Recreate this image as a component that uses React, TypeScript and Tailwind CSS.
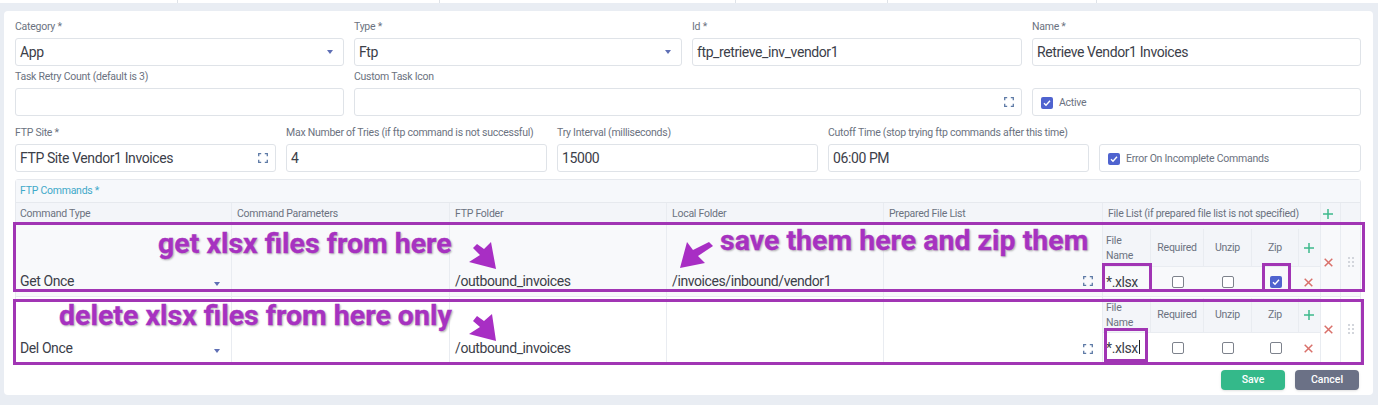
import React from 'react';

const Expand = ({ className = '' }: { className?: string }) => (
  <svg width="10" height="10" viewBox="0 0 10 10" fill="none" stroke="#5d7aa6" strokeWidth="1.3" className={className}>
    <path d="M.7 3.2V.7h2.5M6.8.7h2.5v2.5M9.3 6.8v2.5H6.8M3.2 9.3H.7V6.8" />
  </svg>
);

const Caret = () => <span className="block mr-[3px] w-0 h-0 border-x-[3.5px] border-x-transparent border-t-[4px] border-t-[#5f6fb5]" />;

const Check = ({ checked = false }: { checked?: boolean }) => (
  <span className={`w-[12px] h-[12px] rounded-[2px] flex items-center justify-center shrink-0 ${checked ? 'bg-[#4f63cf]' : 'border border-[#7d828c] bg-white'}`}>
    {checked && (
      <svg width="10" height="10" viewBox="0 0 10 10" fill="none" stroke="#fff" strokeWidth="1.4">
        <path d="M2 5.2l2 2 4-4.4" />
      </svg>
    )}
  </span>
);

const Plus = () => (
  <svg width="10" height="10" viewBox="0 0 10 10" stroke="#3eb98c" strokeWidth="1.5">
    <path d="M5 0v10M0 5h10" />
  </svg>
);

const Cross = () => (
  <svg width="9" height="9" viewBox="0 0 9 9" stroke="#d9706a" strokeWidth="1.5">
    <path d="M.7.7l7.6 7.6M8.3.7L.7 8.3" />
  </svg>
);

const Drag = () => (
  <span className="grid grid-cols-2 gap-x-[2px] gap-y-[2px]">
    {[0, 1, 2, 3, 4, 5].map((i) => (
      <span key={i} className="w-[2px] h-[2px] bg-[#d3d6dc]" />
    ))}
  </span>
);

const small = 'text-[10.5px] tracking-[-0.25px] text-[#6b7280]';
const big = 'text-[14px] tracking-[-0.4px] text-[#3c4049]';

const Field = ({
  label,
  value,
  className = '',
  icon,
}: {
  label: string;
  value?: string;
  className?: string;
  icon?: React.ReactNode;
}) => (
  <div className={className}>
    <div className={`h-[22px] pt-[3px] leading-[16px] whitespace-nowrap ${small}`}>{label}</div>
    <div className={`h-[28px] border border-[#dfe3e8] rounded-[3px] bg-white flex items-center justify-between pl-[4px] pr-[7px] ${big}`}>
      <span>{value}</span>
      {icon}
    </div>
  </div>
);

const CheckField = ({ label, className = '' }: { label: string; className?: string }) => (
  <div className={`${className} flex flex-col justify-end`}>
    <div className={`h-[28px] border border-[#dfe3e8] rounded-[3px] bg-white flex items-center gap-[6px] pl-[8px] pt-[1px] ${small}`}>
      <Check checked />
      {label}
    </div>
  </div>
);

const headers = ['Command Type', 'Command Parameters', 'FTP Folder', 'Local Folder', 'Prepared File List', 'File List (if prepared file list is not specified)'];
const tableCols = 'grid grid-cols-[216px_218px_217px_217px_219px_218px_20px_19px]';
const nestedCols = 'grid grid-cols-[48px_53px_48px_47px_19px]';
const cell = `border-r border-[#e9ecf1] flex items-end pl-[5px] first:pl-[4px] ${big}`;

const Nested = ({ file, zip, headH, pad }: { file: string; zip?: boolean; headH: string; pad: string }) => (
  <div className={`${pad} border-r border-[#e9ecf1]`}>
    <div className={`${nestedCols} ${headH} bg-[#f3f5f9] border-b border-[#e9ecf1] ${small}`}>
      <div className="border-r border-[#e9ecf1] pl-[3px] leading-[15px] flex items-center">
        File
        <br />
        Name
      </div>
      {['Required', 'Unzip', 'Zip'].map((h) => (
        <div key={h} className="border-r border-[#e9ecf1] flex items-center justify-center">
          {h}
        </div>
      ))}
      <div className="flex items-center justify-center">
        <Plus />
      </div>
    </div>
    <div className={`${nestedCols} h-[30px] items-center`}>
      <div className={`pl-[3px] ${big}`}>{file}</div>
      <div className="flex justify-center">
        <Check />
      </div>
      <div className="flex justify-center">
        <Check />
      </div>
      <div className="flex justify-center">
        <Check checked={zip} />
      </div>
      <div className="flex justify-center">
        <Cross />
      </div>
    </div>
  </div>
);

const Row = ({
  type,
  local,
  file,
  zip,
  bg,
  h,
  headH,
  pad,
  crossPad,
  textPad,
  iconPad,
}: {
  type: string;
  local?: string;
  file: string;
  zip?: boolean;
  bg: string;
  h: string;
  headH: string;
  pad: string;
  crossPad: string;
  textPad: string;
  iconPad: string;
}) => (
  <div className={`${tableCols} ${h} ${bg} border-b border-[#e9ecf1]`}>
    <div className={`${cell} ${textPad} justify-between pr-[8px]`}>
      <span>{type}</span>
      <span className="h-[16px] flex items-center">
        <Caret />
      </span>
    </div>
    <div className={`${cell} ${textPad}`} />
    <div className={`${cell} ${textPad}`}>/outbound_invoices</div>
    <div className={`${cell} ${textPad}`}>{local}</div>
    <div className={`${cell} ${iconPad} justify-end pr-[9px]`}>
      <Expand />
    </div>
    <Nested file={file} zip={zip} headH={headH} pad={pad} />
    <div className={`border-r border-[#e9ecf1] flex items-center justify-center pr-[5px] ${crossPad}`}>
      <Cross />
    </div>
    <div className={`flex items-center justify-center ${crossPad}`}>
      <Drag />
    </div>
  </div>
);

// annotation marks drawn over the table
const Mark = ({ className }: { className: string }) => (
  <div className={`absolute border-[3px] border-[#a135b4] pointer-events-none ${className}`} />
);

const Note = ({ children, className }: { children: string; className: string }) => (
  <div
    className={`absolute font-bold text-[28.5px] leading-[30px] text-[#a632c0] whitespace-nowrap [-webkit-text-stroke:0.4px_#a632c0] [text-shadow:0_0_2px_#fff,1px_1px_2px_#9a9a9a] ${className}`}
  >
    {children}
  </div>
);

export default function App() {
  return (
    <div className="relative h-[405px] overflow-hidden bg-[#e9edf3] font-['Roboto',sans-serif]">
      <div className="h-[3px] bg-white flex">
        <div className="w-[178px] border-r border-[#dfe3e8]" />
        <div className="w-[262px] border-r border-[#dfe3e8]" />
        <div className="w-[296px] border-r border-[#dfe3e8]" />
        <div className="w-[152px] border-r border-[#dfe3e8]" />
        <div className="w-[209px] border-r border-[#dfe3e8]" />
      </div>

      <div className="ml-[4px] mt-[8px] w-[1369px] h-[384px] rounded-[4px] bg-white pl-[11px] pr-[12px] pt-[5px]">
        <div className="flex gap-[10px]">
          <Field label="Category *" value="App" className="w-[329px]" icon={<Caret />} />
          <Field label="Type *" value="Ftp" className="w-[328px]" icon={<Caret />} />
          <Field label="Id *" value="ftp_retrieve_inv_vendor1" className="w-[330px]" />
          <Field label="Name *" value="Retrieve Vendor1 Invoices" className="w-[329px]" />
        </div>
        <div className="flex gap-[10px]">
          <Field label="Task Retry Count (default is 3)" className="w-[329px]" />
          <Field label="Custom Task Icon" className="w-[668px]" icon={<Expand />} />
          <CheckField label="Active" className="w-[329px]" />
        </div>
        <div className="flex gap-[10px] mt-[6px]">
          <Field label="FTP Site *" value="FTP Site Vendor1 Invoices" className="w-[261px]" icon={<Expand />} />
          <Field label="Max Number of Tries (if ftp command is not successful)" value="4" className="w-[261px]" />
          <Field label="Try Interval (milliseconds)" value="15000" className="w-[261px]" />
          <Field label="Cutoff Time (stop trying ftp commands after this time)" value="06:00 PM" className="w-[261px]" />
          <CheckField label="Error On Incomplete Commands" className="w-[262px]" />
        </div>

        <div className="mt-[7px] border border-[#e6e9ee] rounded-t-[3px]">
          <div className="h-[23px] bg-[#f6f8fb] border-b border-[#e6e9ee] flex items-center pl-[4px] text-[10.5px] tracking-[-0.25px] text-[#3fa9c9]">
            FTP Commands *
          </div>
          <div className={`${tableCols} h-[19px] bg-[#f3f5f9] ${small}`}>
            {headers.map((h) => (
              <div key={h} className="border-r border-[#e9ecf1] flex items-center pl-[5px] pt-[3px] first:pl-[4px] whitespace-nowrap">
                {h}
              </div>
            ))}
            <div className="border-r border-[#e9ecf1] flex items-center justify-center pr-[5px] pt-[3px]">
              <Plus />
            </div>
            <div />
          </div>
          <Row
            type="Get Once"
            local="/invoices/inbound/vendor1"
            file="*.xlsx"
            zip
            bg="bg-[#f8f9fb]"
            h="h-[75px]"
            headH="h-[41px] pt-[3px]"
            pad="pt-[4px]"
            crossPad="pt-[5px]"
            textPad="pb-[5px]"
            iconPad="pb-[11px]"
          />
          <Row
            type="Del Once"
            file="*.xlsx"
            bg="bg-white"
            h="h-[67px]"
            headH="h-[35px]"
            pad="pt-[1px]"
            crossPad="pb-[2px]"
            textPad="pb-[4px]"
            iconPad="pb-[9px]"
          />
        </div>

        <div className="flex justify-end gap-[10px] mt-[5px] pr-[2px]">
          <button className="w-[64px] h-[20px] rounded-[4px] bg-[#34b98a] text-white text-[10.5px] font-medium shadow-sm">Save</button>
          <button className="w-[64px] h-[20px] rounded-[4px] bg-[#6b7186] text-white text-[10.5px] font-medium shadow-sm">Cancel</button>
        </div>
      </div>

      <Mark className="left-[13px] top-[222px] w-[1352px] h-[70px]" />
      <Mark className="left-[13px] top-[299px] w-[1351px] h-[66px]" />
      <Mark className="left-[1102px] top-[263px] w-[50px] h-[29px]" />
      <Mark className="left-[1262px] top-[263px] w-[29px] h-[29px]" />
      <Mark className="left-[1104px] top-[328px] w-[44px] h-[34px]" />

      <Note className="left-[158px] top-[229px]">get xlsx files from here</Note>
      <Note className="left-[720px] top-[226px]">save them here and zip them</Note>
      <Note className="left-[59px] top-[301px]">delete xlsx files from here only</Note>

      <svg className="absolute left-0 top-0 pointer-events-none" width="1378" height="405" fill="#a82ec4">
        <polygon points="496,269 491,242 484,249 477,244 473,248 480,255 469,262" />
        <polygon points="680,268 687,242 693,250 709,242 713,246 698,256 705,263" />
        <polygon points="496,341 492,314 484,321 477,316 473,321 480,327 469,334" />
      </svg>

      <div className="absolute left-[1139px] top-[340px] w-px h-[14px] bg-[#222]" />
    </div>
  );
}
